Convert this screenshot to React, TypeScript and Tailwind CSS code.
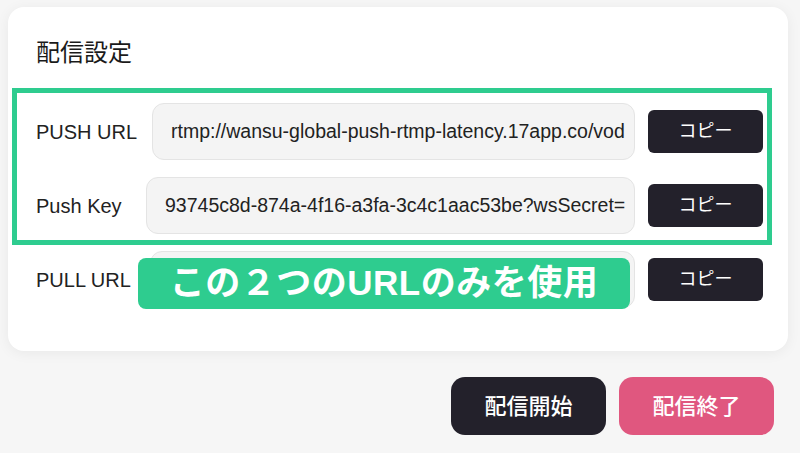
const font = { fontFamily: '"Liberation Sans", Arial, "Noto Sans CJK JP", sans-serif' };

const rows = [
  { label: 'PUSH URL', value: 'rtmp://wansu-global-push-rtmp-latency.17app.co/vod', inset: 'ml-[15px]' },
  { label: 'Push Key', value: '93745c8d-874a-4f16-a3fa-3c4c1aac53be?wsSecret=', inset: 'ml-[9px]' }
];

const Field = ({ label, value, inset }: { label: string; value: string; inset: string }) => (
  <div className="flex items-center">
    <span className="w-[101px] shrink-0 whitespace-nowrap text-[20px] text-[#222]">{label}</span>
    <div
      className={`${inset} flex h-[57px] min-w-0 flex-1 items-center overflow-hidden whitespace-nowrap rounded-[12px] border border-[#e4e4e4] bg-[#f4f4f4] pl-[18px] text-[19.5px] text-[#222]`}
    >
      {value}
    </div>
    <button className="ml-[13px] h-[43px] w-[115px] shrink-0 rounded-[6px] bg-[#23212b] text-[18px] text-white">
      コピー
    </button>
  </div>
);

export default function App() {
  return (
    <div className="h-[453px] w-[800px] overflow-hidden bg-[#f6f6f6] pt-[7px]" style={font}>
      <div className="ml-[8px] mr-[12px] rounded-[16px] bg-white px-[4px] pb-[43px] shadow-[0_2px_14px_rgba(0,0,0,0.06)]">
        <h1 className="pl-[24px] pt-[32px] text-[24px] leading-[28px] text-[#1a1a1a]">配信設定</h1>

        <div className="mr-[12px] mt-[21px] flex flex-col gap-[17px] border-[5px] border-[#2ecc8f] pb-[6px] pl-[19px] pr-[4px] pt-[10px]">
          {rows.map((r) => (
            <Field key={r.label} {...r} />
          ))}
        </div>

        <div className="relative mr-[21px] mt-[6px] pl-[24px]">
          <Field label="PULL URL" value="" inset="ml-[13px]" />
          <div className="absolute left-[126px] top-[7px] flex h-[51px] w-[492px] items-center justify-center rounded-[8px] bg-[#2ecc8f] text-[35px] font-bold tracking-[0.5px] text-white">
            この２つのURLのみを使用
          </div>
        </div>
      </div>

      <div className="mr-[26px] mt-[26px] flex justify-end gap-[13px]">
        <button className="h-[58px] w-[155px] rounded-[14px] bg-[#23212b] text-[22px] font-medium text-white">
          配信開始
        </button>
        <button className="h-[58px] w-[155px] rounded-[14px] bg-[#e0577f] text-[22px] font-medium text-white">
          配信終了
        </button>
      </div>
    </div>
  );
}
